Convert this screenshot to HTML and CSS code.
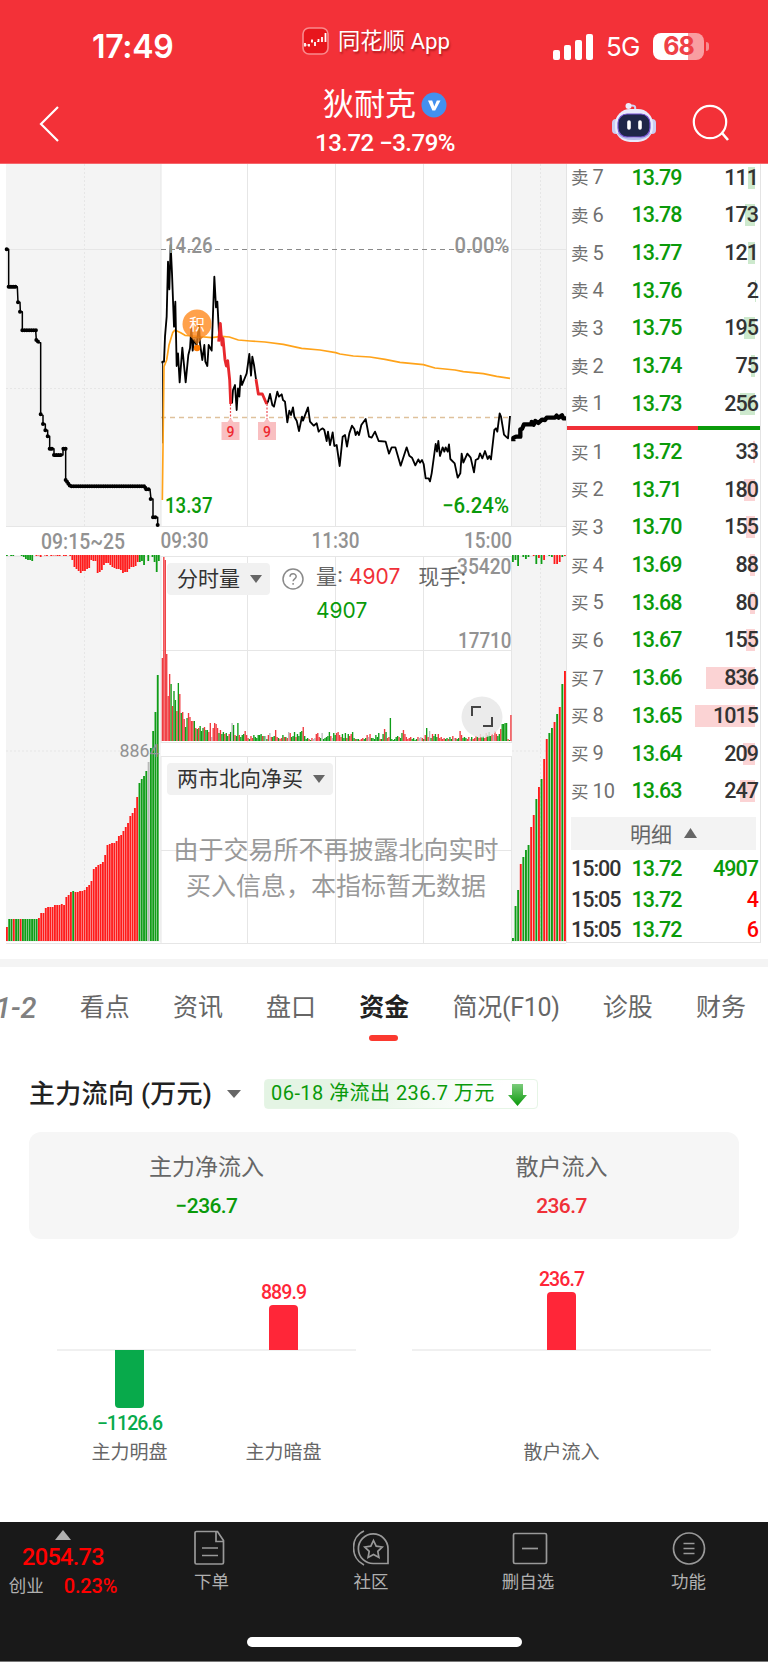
FILE: index.html
```html
<!DOCTYPE html>
<html lang="zh-CN">
<head>
<meta charset="utf-8">
<title>狄耐克 13.72</title>
<link rel="stylesheet" href="styles.css">
</head>
<body>
<div class="app">
  <header class="header">
    <div class="status">
      <div class="status-time">17:49</div>
      <div class="status-app">
        <svg width="27" height="28" viewBox="0 0 27 28"><rect x="1" y="1" width="25" height="26" rx="6" fill="#e8161d" stroke="#f98a8d" stroke-width="1.6"/><path d="M3 16v3.500M7 17v2.500M10 12.500v3M13 15v4M16.500 12v3M20 10v5M23.500 6v9" stroke="#fff" stroke-width="1.800"/><path d="M4 18h3M9 15l2-2M15 15l2-2" fill="none" stroke="#fff" stroke-width=".7"/></svg>
        <span>同花顺 App</span>
      </div>
      <div class="status-right">
        <svg width="40" height="26" viewBox="0 0 40 26" fill="#fff"><rect x="0" y="16" width="7" height="10" rx="2"/><rect x="11" y="11" width="7" height="15" rx="2"/><rect x="22" y="6" width="7" height="20" rx="2"/><rect x="33" y="0" width="7" height="26" rx="2"/></svg>
        <span class="net">5G</span>
        <span class="battery">68</span><i class="nub"></i>
      </div>
    </div>
    <div class="titlebar">
      <svg class="back" width="22" height="38" viewBox="0 0 22 38"><path d="M20 2L3 19l17 17" fill="none" stroke="#fff" stroke-width="2.200"/></svg>
      <div class="stock">
        <div class="stock-name">狄耐克<svg width="26" height="26" viewBox="0 0 26 26"><circle cx="13" cy="13" r="12.500" fill="#4390ee"/><path d="M7 8.500h4.200l2.100 6 2.500-6h3.700l-5.300 10h-2.800z" fill="#fff"/></svg></div>
        <div class="stock-price">13.72 −3.79%</div>
      </div>
      <div class="actions">
        <svg width="44" height="42" viewBox="0 0 44 42"><path d="M23 8c1-4-1-5-5-4.500" fill="none" stroke="#cfd3f4" stroke-width="2"/><circle cx="16.500" cy="4" r="3" fill="#eceefd"/><rect x="0" y="17" width="8" height="15" rx="4" fill="#c9cdf2"/><rect x="36" y="17" width="8" height="15" rx="4" fill="#c9cdf2"/><rect x="3" y="7" width="38" height="33" rx="15" fill="#e9ebfc"/><path d="M6 31c4 8 28 8 32 0" fill="none" stroke="#b7bdec" stroke-width="2"/><rect x="6" y="12" width="32" height="23" rx="9" fill="#1e2648" stroke="#7450cf" stroke-width="1.200"/><path d="M17 20v6M28 20v6" stroke="#fff" stroke-width="3.600" stroke-linecap="round"/></svg>
        <svg width="38" height="38" viewBox="0 0 38 38"><circle cx="18" cy="18" r="16.200" fill="none" stroke="#fff" stroke-width="2.200"/><path d="M30 29l6 7" stroke="#fff" stroke-width="2.600"/></svg>
      </div>
    </div>
  </header>

  <section class="market">
    <div class="chart">
      <svg class="plot" width="566" height="782" viewBox="0 164 566 782">
        <g fill="#f4f4f4"><path d="M6 164h155v362.500H6zM512 164h54v362.500h-54zM6 555h155v387H6zM512 555h54v387h-54z"/></g>
        <g fill="none" stroke="#e6e6e6" stroke-width="1">
          <path d="M161 164v362M247.500 164v362M335.500 164v362M423.500 164v362M511.500 164v362M6 526.500h560M161 388.500h351M6 249.500h155M512 249.500h54"/>
          <path d="M6 556.500h560M247.500 556v187M335.500 556v187M423.500 556v187M511.500 556v187M161 650.500h351M161 742.500h351M161 556v187"/>
          <path d="M161 756.500h351M161 756v187M247.500 756v187M335.500 756v187M423.500 756v187M511.500 756v187M161 850.500h351M6 943.500h560"/>
          <path stroke-dasharray="2 2" d="M84.500 164v362M6 388.500h155M84.500 556v386M6 751h155M540.500 164v362M512 388.500h54M540.500 556v386M512 751h54"/>
        </g>
        <path d="M161 249.500h351" stroke="#8a8a8a" stroke-width="1.200" stroke-dasharray="5 4"/>
        <path d="M161 417.500h351" stroke="#dfc19c" stroke-width="1.300" stroke-dasharray="5 4"/>
        <g id="bars"></g>

        <g fill="none" stroke-linejoin="round">
          <g transform="translate(0 160) scale(.33333)" stroke="#000">
            <path stroke-width="4.500" d="M20 268H26V380H52L54 427H60L61 455H67V511H107L109 540L115 548H122V763L129 766V792H136V811H143V829H149V866H162V885H189V866H197V960L210 979H433L437 988H450L453 1017H459V1072H473V1095"/>
            <path stroke-width="12" stroke-linecap="round" stroke-dasharray="0 6.800" d="M20 268h6M26 380h26M54 427h6M60 455h2M67 511h42M109 540l8 8M122 763h1M129 792h1M136 811h1M143 829h1M149 866h12M162 885h27M190 866h7M197 960l14 19h224l2 9h14M452 1017h2M459 1072h12M473 1095h1"/>
          </g>
          <g transform="translate(150 230) scale(.33333)">
            <path stroke="#000" stroke-width="3" d="M38 395V640"/>
            <path stroke="#ffa31a" stroke-width="5" d="M37 810L42 410L50 390L57 345L68 308L75 300L92 308L105 316L130 318L185 323L215 319L238 321L265 330L300 333L345 336L400 343L455 355L510 360L557 368L570 372L610 378L660 381L705 388L750 397L820 404L855 414L915 420L940 425L1000 431L1040 439L1080 445"/>
            <path stroke="#000" stroke-width="5.500" d="M37 400V395H42L45 320L50 260L54 95L58 178L62 45L66 130L72 290L76 215L80 408L84 370L89 457L97 353L107 457L115 375L120 355L124 295L128 362L132 330L140 345L147 285L150 340L157 390L163 345L166 395L172 408L176 345L185 362L193 140L198 232L202 215L207 310M246 520L249 480L255 465L260 540L264 475L268 500L272 437L276 465L290 430L298 372L303 437L307 380L312 405L318 448M350 522L354 515L360 492L367 525L372 530L382 485L387 500L395 493L399 510L405 515L412 577L418 542L423 555L429 532L433 560L440 572L447 603L456 560L459 572L474 532L480 575L491 587L500 580L506 605L510 600"/>
            <path stroke="#e8282d" stroke-width="8.500" d="M206 335L211 280L216 345L219 325L225 390L229 408L233 392L239 450L242 522M318 448L325 492H337L350 522"/>
          </g>
          <g transform="translate(320 340) scale(.33333)" stroke="#000">
            <path stroke-width="5.500" d="M0 270L8 265L13 270L20 303L24 275L30 315L38 277L43 318L50 315L59 378L68 290L75 285L81 320L88 280L96 257L103 267L107 285L112 275L117 285L124 255L137 237L147 290L155 293L165 275L176 303L197 305L207 341L215 322H226L242 377L260 322L268 347L276 353L286 376L295 358L300 368L306 360L311 372L317 415H326L330 424L335 400L347 312L351 335L355 303L360 348L368 322L373 335L377 322L383 335L387 313L391 357L404 370L413 413L421 400L425 341L430 368L442 341L452 353L462 397L467 360L475 356L480 340L487 355L495 333L503 357L508 348L513 358L523 270L528 265L532 275L539 220L543 230L552 284L558 290L564 295L570 228"/>
            <path stroke-width="13" d="M580 304V294L588 290H601V268L606 267L612 253H635V246L641 254L646 243L655 249L666 239L675 240L680 233H705L710 227L716 233L726 226L730 235H738"/>
          </g>
        </g>

        <circle cx="197" cy="324" r="14.500" fill="#ff8a1e" fill-opacity=".8"/>
        <path d="M191 337h12l-6 8z" fill="#d87618" fill-opacity=".8"/>
        <circle cx="197" cy="348" r="3.200" fill="#ff7a00"/>
        <text class="t-cjk" x="197" y="329.500" font-size="15.500" fill="#fff" text-anchor="middle">积</text>
        <path d="M230.500 404v16M267 404v16" stroke="#ef4a50" stroke-width="1.200" stroke-dasharray="2 1.500"/>
        <path d="M230.500 418l3 4h6v18h-18v-18h6zM267 418l3 4h6v18h-18v-18h6z" fill="#f9bfc1"/>
        <text class="t-num" x="230.500" y="436.500" font-size="14" fill="#ee2830" text-anchor="middle">9</text>
        <text class="t-num" x="267" y="436.500" font-size="14" fill="#ee2830" text-anchor="middle">9</text>

        <g class="t-num" font-size="21.500" fill="#929292">
          <text x="165" y="253" textLength="47.500" lengthAdjust="spacingAndGlyphs">14.26</text>
          <text x="454.500" y="253" textLength="55" lengthAdjust="spacingAndGlyphs">0.00%</text>
          <text x="165" y="513" textLength="47.500" lengthAdjust="spacingAndGlyphs" fill="#0a9a0a">13.37</text>
          <text x="442" y="513" textLength="67" lengthAdjust="spacingAndGlyphs" fill="#0a9a0a">−6.24%</text>
          <text x="41" y="549" textLength="84" lengthAdjust="spacingAndGlyphs">09:15~25</text>
          <text x="160.500" y="547.500" textLength="48" lengthAdjust="spacingAndGlyphs">09:30</text>
          <text x="311.500" y="547.500" textLength="48" lengthAdjust="spacingAndGlyphs">11:30</text>
          <text x="464" y="547.500" textLength="48" lengthAdjust="spacingAndGlyphs">15:00</text>
          <text x="457" y="573.500" textLength="54.500" lengthAdjust="spacingAndGlyphs">35420</text>
          <text x="458" y="648" textLength="53.500" lengthAdjust="spacingAndGlyphs">17710</text>
          <text x="119.500" y="757" font-size="17.500" font-weight="400" textLength="40" lengthAdjust="spacingAndGlyphs">8864</text>
        </g>
      </svg>
      <div class="panel panel-volume">
        <div class="dropdown">分时量<i class="caret"></i></div>
        <svg class="help" width="22" height="22" viewBox="0 0 22 22"><circle cx="11" cy="11" r="10" fill="none" stroke="#8a8a8a" stroke-width="1.500"/><path d="M8 8.800c0-4 6.200-4 6.200-.2 0 2.200-3.100 2.300-3.100 4.700M11.100 15v1.800" fill="none" stroke="#8a8a8a" stroke-width="1.500"/></svg>
        <div class="readout"><span>量:</span> <b class="up">4907</b><span class="hand">现手:</span><br><b class="down">4907</b></div>
      </div>
      <div class="panel panel-north">
        <div class="dropdown">两市北向净买<i class="caret"></i></div>
        <p class="notice">由于交易所不再披露北向实时<br>买入信息，本指标暂无数据</p>
      </div>
      <svg class="expand" width="42" height="42" viewBox="0 0 42 42"><circle cx="21" cy="21" r="20.500" fill="#e8e8e8" fill-opacity=".85"/><path d="M11 20v-9h9M31 21v9h-9" fill="none" stroke="#444" stroke-width="2"/></svg>
    </div>

    <div class="book">
      <div class="sells" id="sells"></div>
      <div class="ratio"><i></i></div>
      <div class="buys" id="buys"></div>
      <div class="detail">明细<svg width="13" height="10" viewBox="0 0 13 10"><path d="M0 10L6.500 0 13 10z" fill="#666"/></svg></div>
      <div class="tick"><span>15:00</span><span class="down">13.72</span><span class="down">4907</span></div>
      <div class="tick"><span>15:05</span><span class="down">13.72</span><span class="hot">4</span></div>
      <div class="tick"><span>15:05</span><span class="down">13.72</span><span class="hot">6</span></div>
    </div>
  </section>

  <nav class="tabs">
    <span class="tab-level">1-2</span><span>看点</span><span>资讯</span><span>盘口</span><span class="active">资金</span><span class="f10">简况(F10)</span><span>诊股</span><span>财务</span>
  </nav>

  <section class="flow">
    <div class="flow-head">
      <h2>主力流向 (万元)</h2><i class="caret"></i>
      <div class="flow-badge"><span>06-18 净流出 236.7 万元</span>
        <svg width="19" height="23" viewBox="0 0 19 23"><defs><linearGradient id="arrow" x2="0" y2="1"><stop stop-color="#7ccb7c"/><stop offset="1" stop-color="#0a9a0a"/></linearGradient></defs><path d="M4 1h11v11h4l-9.500 11L0 12h4z" fill="url(#arrow)"/></svg>
      </div>
    </div>
    <div class="flow-card">
      <div>主力净流入<b class="down">−236.7</b></div>
      <div>散户流入<b class="up">236.7</b></div>
    </div>
    <div class="flow-chart">
      <div class="group">
        <div class="col"><div class="pos"></div><div class="neg"><i class="bar-down"></i><b>−1126.6</b></div><span>主力明盘</span></div>
        <div class="col"><div class="pos"><b>889.9</b><i class="bar-up short"></i></div><div class="neg"></div><span>主力暗盘</span></div>
      </div>
      <div class="group">
        <div class="col"><div class="pos"><b>236.7</b><i class="bar-up"></i></div><div class="neg"></div><span>散户流入</span></div>
      </div>
    </div>
  </section>

  <footer class="footer">
    <div class="index">
      <svg width="16" height="10" viewBox="0 0 16 10"><path d="M0 10L8 0l8 10z" fill="#b0b0b0"/></svg>
      <div class="index-value">2054.73</div>
      <div class="index-row"><span>创业</span><b>0.23%</b></div>
    </div>
    <div class="item i1"><svg viewBox="0 0 36 36"><path d="M4.500 1.500h21l6 9v22a1.500 1.500 0 0 1-1.500 1.500H4.500A1.500 1.500 0 0 1 3 32.500V3a1.500 1.500 0 0 1 1.500-1.500zM24 2v9.500h7.500M10 18h16M10 25.500h16"/></svg><span>下单</span></div>
    <div class="item i2"><svg viewBox="0 0 36 36"><path d="M21 33.500A14.800 14.800 0 1 1 35 19v14.500zM11 1C-3 7-3 28 11 35"/><path d="M20.500 10.500l2.700 5.700 6 .8-4.400 4.300 1.100 6.200-5.400-3-5.400 3 1.100-6.200-4.400-4.300 6-.8z"/></svg><span>社区</span></div>
    <div class="item i3"><svg viewBox="0 0 36 36"><rect x="1.500" y="3.500" width="33" height="30" rx="1.500"/><path d="M10 18.500h16"/></svg><span>删自选</span></div>
    <div class="item i4"><svg viewBox="0 0 36 36"><circle cx="18" cy="18.500" r="15.500"/><path d="M12.500 13.500h11M12.500 18.500h11M12.500 23.500h11"/></svg><span>功能</span></div>
    <div class="home"></div>
  </footer>
</div>
<script src="app.js"></script>
</body>
</html>
```

FILE: styles.css
```css
* { box-sizing: border-box; }
body { margin: 0; background: #fff; color: #333; font-family: Roboto, "Noto Sans CJK SC", sans-serif; }
i, b { font-style: normal; font-weight: 500; }
.app { width: 768px; height: 1662px; overflow: hidden; display: flex; flex-direction: column; }
.up { color: #f03038; }
.down { color: #0a9a0a; }
.hot { color: #ff0000; }
.caret { display: inline-block; border: 6px solid transparent; border-top: 8px solid #666; border-bottom: 0; }

.header { height: 164px; background: #f33138; color: #fff; border-bottom: 1px solid #f5666b; flex: none; }
.status { height: 84px; display: grid; grid-template-columns: 302px 251px 1fr; align-items: start; }
.status-time { padding: 28px 0 0 92px; font: 600 32px/38px Inter, sans-serif; letter-spacing: -.3px; }
.status-app { display: flex; align-items: center; gap: 9px; padding-top: 26px; font-size: 22.300px; line-height: 30px; text-shadow: 1px 2px 2px rgba(90, 0, 0, .45); white-space: nowrap; }
.status-right { display: flex; align-items: center; padding-top: 33px; }
.net { margin-left: 12px; font: 400 26px/27px Inter, sans-serif; letter-spacing: -.8px; width: 48px; padding-left: 1px; }
.battery { width: 51px; height: 27px; border-radius: 8px; background: linear-gradient(90deg, #fff 69%, #f99ea1 69%); color: #ef4147; font: 700 25px/27px Inter, sans-serif; text-align: center; letter-spacing: -1px; }
.nub { width: 3px; height: 9px; margin-left: 2px; border-radius: 0 3px 3px 0; background: #f88b8f; }
.titlebar { height: 79px; display: grid; grid-template-columns: 250px 268px 250px; align-items: start; }
.back { margin: 21px 0 0 38px; }
.stock { display: flex; flex-direction: column; align-items: center; padding-left: 2px; }
.stock-name { display: flex; align-items: center; gap: 5px; height: 42px; font-size: 31px; line-height: 42px; }
.stock-price { height: 32px; font-size: 24px; font-weight: 500; line-height: 35px; letter-spacing: -.5px; white-space: nowrap; }
.actions { display: flex; align-items: center; padding: 18px 0 0 94px; gap: 36px; }

.market { height: 795px; display: grid; grid-template-columns: 566px 202px; flex: none; }
.chart { position: relative; }
.plot { display: block; }
.t-num { font-family: Roboto, sans-serif; font-weight: 500; }
.t-cjk { font-family: "Noto Sans CJK SC", sans-serif; }
.panel { position: absolute; left: 167px; width: 345px; }
.panel-volume { top: 399px; display: flex; align-items: flex-start; }
.panel-north { top: 599px; }
.dropdown { display: inline-flex; align-items: center; gap: 10px; height: 32px; padding: 0 8px 0 10px; border-radius: 4px; background: #f1f1f1; font-size: 21px; line-height: 32px; white-space: nowrap; }
.help { margin: 5px 0 0 12px; flex: none; }
.readout { margin: -3px 0 0 12px; font: 21px/34px Inter, "Noto Sans CJK SC", sans-serif; color: #666; white-space: nowrap; }
.readout b { font-weight: 400; }
.hand { margin-left: 18px; }
.notice { margin: 38px 0 0 -2px; width: 342px; text-align: center; font-size: 25px; line-height: 36px; color: #999; }
.expand { position: absolute; left: 461px; top: 532px; }

.book { height: 779px; border: 1px solid #e4e4e4; border-width: 0 1px 1px 1px; width: 195px; overflow: hidden; display: flex; flex-direction: column; }
.sells { height: 262px; padding-bottom: 3.300px; display: flex; flex-direction: column; justify-content: flex-end; flex: none; }
.row { display: grid; grid-template-columns: 60.500px 60px 1fr; align-items: center; height: 37.700px; flex: none; padding: 0 3px 0 4px; font-size: 21.500px; line-height: 28px; font-weight: 500; letter-spacing: -1px; }
.row .lv { font-size: 20px; font-weight: 400; color: #707070; letter-spacing: 0; white-space: nowrap; }
.row .lv em { font-style: normal; font-size: 17.500px; margin-right: 4px; }
.row .vol { position: relative; text-align: right; margin-right: -1px; }
.row .vol i { position: absolute; right: 3px; top: 3px; height: 22px; background: #cde9cd; }
.buys .vol i { background: #fbd3d4; }
.row .vol span { position: relative; }
.ratio { height: 4px; background: #0a9a0a; flex: none; }
.ratio i { display: block; width: 131px; height: 4px; background: #f03038; }
.buys { padding-top: 3.200px; }
.detail { display: flex; align-items: center; justify-content: center; gap: 12px; height: 33px; margin: 6.500px 4px 3.500px; background: #f3f3f3; color: #666; font-size: 21px; flex: none; }
.tick { display: grid; grid-template-columns: 60.500px 60px 1fr; height: 30.500px; line-height: 31.500px; padding: 0 2px 0 4px; font-size: 21.500px; font-weight: 500; letter-spacing: -1px; flex: none; }
.tick span:last-child { text-align: right; }

.tabs { height: 120px; border-top: 8px solid #f4f4f4; display: flex; align-items: flex-start; gap: 43.200px; padding-top: 20px; font-size: 25px; line-height: 42px; color: #666; white-space: nowrap; flex: none; }
.tab-level { width: 36.500px; font: italic 500 29px/42px Roboto, sans-serif; display: flex; justify-content: flex-end; letter-spacing: 0; color: #808080; }
.f10 { letter-spacing: -.3px; }
.active { position: relative; color: #222; font-weight: 700; }
.active::after { content: ""; position: absolute; left: 10px; top: 47.500px; width: 29px; height: 6px; border-radius: 3px; background: #fb392f; }

.flow { height: 443px; padding: 0 29px; flex: none; }
.flow-head { display: flex; align-items: center; height: 30px; }
.flow-head h2 { margin: 0; font-size: 26px; font-weight: 500; line-height: 32px; letter-spacing: .3px; width: 198px; white-space: nowrap; color: #222; }
.flow-head .caret { border-width: 8px 7px 0; }
.flow-badge { display: flex; align-items: center; justify-content: space-between; margin-left: 23px; width: 274px; height: 30px; padding: 0 10px 0 6px; border: 1px solid #e6f5e6; border-radius: 4px; background: linear-gradient(110deg, #e4f4e4 30%, #fff 85%); color: #0a9a0a; font-size: 20px; letter-spacing: .45px; line-height: 26px; white-space: nowrap; }
.flow-badge span { padding-bottom: 2px; }
.flow-card { display: grid; grid-template-columns: 1fr 1fr; height: 107px; margin-top: 23px; padding-top: 18px; border-radius: 12px; background: #f6f6f6; text-align: center; font-size: 23px; line-height: 36px; color: #666; }
.flow-card b { display: block; font-size: 21px; line-height: 40px; letter-spacing: -.6px; }
.flow-chart { display: grid; grid-template-columns: 299px 299px; gap: 56px; padding-left: 28px; }
.group { display: flex; justify-content: center; background: linear-gradient(#f0f0f0, #f0f0f0) 0 110px / 100% 2px no-repeat; }
.col { width: 154px; flex: none; display: flex; flex-direction: column; align-items: center; font-size: 19px; line-height: 30px; color: #666; }
.pos { height: 111px; display: flex; flex-direction: column; justify-content: flex-end; align-items: center; color: #ff2638; }
.neg { height: 88px; display: flex; flex-direction: column; align-items: center; color: #08aa4b; }
.col b { font-size: 19.500px; line-height: 22px; letter-spacing: -.9px; }
.bar-up { width: 29px; height: 58px; margin-top: 1px; border-radius: 4px 4px 0 0; background: #ff2638; }
.short { height: 45px; }
.bar-down { width: 29px; height: 58px; margin-bottom: 5px; border-radius: 0 0 4px 4px; background: #08aa4b; }

.footer { position: relative; height: 140px; background: #191919; color: #b0b0b0; border-bottom: 1px solid #777; display: grid; grid-template-columns: 130px 159px 164px 156px 159px; flex: none; font-size: 17.500px; }
.index { display: flex; flex-direction: column; align-items: center; padding: 8px 4px 0 0; }
.index-value { height: 30px; font-size: 23.500px; line-height: 35px; font-weight: 500; color: #ff0000; letter-spacing: -.7px; }
.index-row { display: flex; gap: 20px; line-height: 32px; }
.index-row b { color: #ff0000; font-size: 20px; letter-spacing: -.2px; }
.item { display: flex; flex-direction: column; align-items: center; padding-top: 8px; }
.item svg { width: 36px; height: 36px; fill: none; stroke: #999; stroke-width: 1.700; }
.item span { line-height: 33px; }
.item.i3 { padding-right: 2px; }
.item.i3 span { padding-right: 4px; }
.item.i1 { padding-left: 1px; }
.item.i1 span { padding-left: 3px; }
.home { position: absolute; left: 247px; top: 115px; width: 275px; height: 10px; border-radius: 5px; background: #fff; }
```

FILE: app.js
```js
const COLORS = { r: '#ff1a1a', g: '#0f9d17', n: '#b8b8b8' };
const NS = 'http://www.w3.org/2000/svg';
const bars = document.getElementById('bars');

function bar(x, y, width, height, color) {
  const el = document.createElementNS(NS, 'rect');
  el.setAttribute('x', x);
  el.setAttribute('y', y);
  el.setAttribute('width', width);
  el.setAttribute('height', height);
  el.setAttribute('fill', color);
  bars.appendChild(el);
}

// Accumulated volume of the opening auction, one entry per step.
const opening = [14,22,22,22,22,22,22,22,22,22,22,22,22,22,23,28,28,33,34,34,34,36,36,36,37,36,44,46,49,50,49,49,50,50,51,54,56,60,72,74,76,77,79,86,96,97,98,98,100,105,106,110,114,118,125,128,133,144,158,162,165,170,179,193,210,229,266];
const openingColors = 'rggrggrgggggggrrrrrrrrrrrrrrrgrrrrrrrrrrrrrrrrrrrrrrrrrrrrggggngggg';
opening.forEach((h, i) => bar(6 + i * 2.285, 941 - h, 1.85, h, COLORS[openingColors[i]]));

// Unmatched volume of the opening auction.
const unmatched = [1,0,1,1,0,0,0,1,2,4,5,5,6,0,1,.5,2,0,.5,1,0,1,.5,.5,1,1,0,1,1,0,1,5,12,14,16,18,16,16,14,13,5,6,6,18,17,15,10,8,8,10,12,13,14,14,15,18,17,17,14,12,12,11,7,7,6,10,0,6,0,2,7,17,6];
unmatched.forEach((h, i) => bar(6 + i * 2.11, 555, 1.8, h, i < 13 || i > 62 ? COLORS.g : COLORS.r));

// Closing auction.
const closing = [3,35,51,77,84,91,96,114,126,142,154,162,182,202,208,213,219,227,234,257,270];
const closingColors = 'gggrgggrrgrgrrggrgrgr';
closing.forEach((h, i) => bar(512 + i * 2.6, 941 - h, 1.9, h, COLORS[closingColors[i]]));
const closingTop = [7,5,11,0,2,4,2,0,1,9,3,9,5,0,1,2,9,9,7,2,1];
const closingTopColors = 'ggggggggrgrgrgggrrrgr';
closingTop.forEach((h, i) => bar(512 + i * 2.6, 555, 1.8, h, COLORS[closingTopColors[i]]));

// Minute volume.
const volume = [83,184,181,87,45,67,57,35,50,41,30,58,47,28,29,22,14,23,28,24,20,20,20,13,12,13,15,10,13,14,11,11,9,18,4,13,18,17,13,8,11,7,9,7,8,5,7,9,18,16,6,5,18,6,4,6,7,10,6,3,2,5,3,6,4,3,6,6,7,5,5,5,2,6,8,4,4,5,11,4,3,2,
3,6,4,4,3,9,8,4,5,9,4,7,5,9,10,14,5,2,3,2,1,3,2,3,7,8,4,3,8,2,3,4,5,9,5,3,8,6,8,9,6,4,7,3,8,3,7,5,7,9,3,2,2,2,1,2,3,2,3,6,4,7,3,3,2,6,4,8,2,2,7,12,9,3,4,23,2,1,2,4,5,4,3,8,11,7,4,2,3,4,2,3,1,2,4,3,4,3,2,6,13,4,10,3,7,5,7,4,7,3,4,2,3,2,3,2,4,2,5,3,3,2,3,10,6,3,4,3,2,4,2,4,2,3,5,4,3,7,4,5,3,8,6,9,5,7,6,10,7,5,7,12,17,17,18,18,2,1,26];
const volumeColors = 'rrrrrrgrggrgrgrrggrrrrgrgrgggrggrrnrrrrgrggrgg';
volume.forEach((h, i) => {
  const c = i < volumeColors.length ? volumeColors[i] : h === 23 || (h > 12 && i > 170 && h !== 26) ? 'g' : h === 12 || h === 26 || h === 14 ? 'r' : 'grggrrngrrgg'[(i * 7 + h * 5) % 12];
  bar(161.7 + i * (350 / volume.length), 741 - h, 1.35, h, c === 'r' ? '#f03a3f' : COLORS[c]);
});

function rows(id, prefix, list) {
  document.getElementById(id).innerHTML = list.map(([level, price, vol]) =>
    `<div class="row"><span class="lv"><em>${prefix}</em>${level}</span><span class="down">${price}</span><span class="vol"><i style="width:${vol * 0.059}px"></i><span>${vol}</span></span></div>`).join('');
}
rows('sells', '卖', [[7,'13.79',111],[6,'13.78',173],[5,'13.77',121],[4,'13.76',2],[3,'13.75',195],[2,'13.74',75],[1,'13.73',256]]);
rows('buys', '买', [[1,'13.72',33],[2,'13.71',180],[3,'13.70',155],[4,'13.69',88],[5,'13.68',80],[6,'13.67',155],[7,'13.66',836],[8,'13.65',1015],[9,'13.64',209],[10,'13.63',247]]);
```
